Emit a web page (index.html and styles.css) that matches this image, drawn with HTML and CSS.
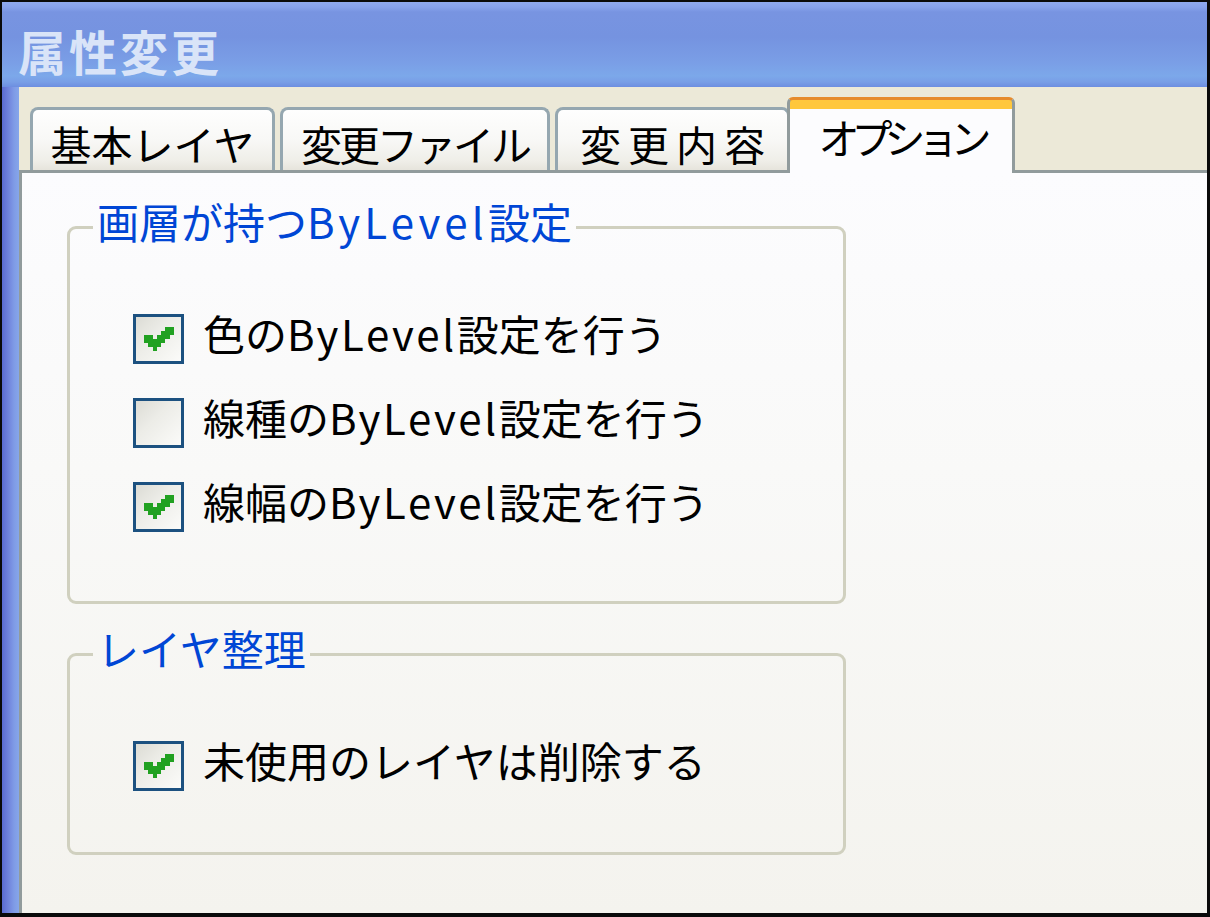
FILE: index.html
```html
<!DOCTYPE html>
<html lang="ja">
<head>
<meta charset="utf-8">
<title>属性変更</title>
<link rel="stylesheet" href="styles.css">
</head>
<body>
<div class="window">
  <div class="titlebar"><span class="title">属性変更</span></div>
  <div class="main">
    <div class="side-frame"></div>
    <div class="client">
      <div class="tabs">
        <div class="tab tab-1">基本レイヤ</div>
        <div class="tab tab-2">変更ファイル</div>
        <div class="tab tab-3">変更内容</div>
        <div class="tab tab-active">オプション</div>
      </div>
      <div class="pane">
        <fieldset class="group group-bylevel">
          <legend class="group-label">画層が持つ<span class="lat">ByLevel</span>設定</legend>
          <div class="rows rows-bylevel">
            <div class="check">
              <span class="box"><svg class="mark" viewBox="0 0 7 6" preserveAspectRatio="none" shape-rendering="crispEdges"><path d="M5 0h2v1h-2zM4 1h3v1h-3zM0 2h2v1h-2zM3 2h3v1h-3zM0 3h5v1h-5zM1 4h3v1h-3zM2 5h1v1h-1z"/></svg></span>
              <span class="check-label">色の<span class="lat">ByLevel</span>設定を行う</span>
            </div>
            <div class="check">
              <span class="box"></span>
              <span class="check-label">線種の<span class="lat">ByLevel</span>設定を行う</span>
            </div>
            <div class="check">
              <span class="box"><svg class="mark" viewBox="0 0 7 6" preserveAspectRatio="none" shape-rendering="crispEdges"><path d="M5 0h2v1h-2zM4 1h3v1h-3zM0 2h2v1h-2zM3 2h3v1h-3zM0 3h5v1h-5zM1 4h3v1h-3zM2 5h1v1h-1z"/></svg></span>
              <span class="check-label">線幅の<span class="lat">ByLevel</span>設定を行う</span>
            </div>
          </div>
        </fieldset>
        <fieldset class="group group-layer">
          <legend class="group-label">レイヤ整理</legend>
          <div class="rows rows-layer">
            <div class="check">
              <span class="box"><svg class="mark" viewBox="0 0 7 6" preserveAspectRatio="none" shape-rendering="crispEdges"><path d="M5 0h2v1h-2zM4 1h3v1h-3zM0 2h2v1h-2zM3 2h3v1h-3zM0 3h5v1h-5zM1 4h3v1h-3zM2 5h1v1h-1z"/></svg></span>
              <span class="check-label">未使用のレイヤは削除する</span>
            </div>
          </div>
        </fieldset>
      </div>
    </div>
  </div>
</div>
</body>
</html>
```

FILE: styles.css
```css
html, body {
  margin: 0;
  padding: 0;
  background: #000;
}

.window {
  box-sizing: border-box;
  width: 1210px;
  height: 917px;
  border-style: solid;
  border-color: #0a0a0a;
  border-width: 2px 3px 4px 2px;
  display: flex;
  flex-direction: column;
  font-family: "Noto Sans CJK JP", "Noto Sans", sans-serif;
  color: #000;
  overflow: hidden;
}

.titlebar {
  flex: none;
  height: 85px;
  box-sizing: border-box;
  padding: 10px 0 0 16px;
  display: flex;
  align-items: center;
  background: linear-gradient(to bottom,
    #8fa9ee 0px, #87a2ec 5px, #7894e1 10px, #7593e0 35px,
    #7a9ee6 60px, #7ca8ea 74px, #789ee6 80px, #6d8ee0 85px);
}

.title {
  color: #d9e4f8;
  font-size: 48px;
  font-weight: bold;
  line-height: 1;
  letter-spacing: 3px;
}

.main {
  flex: 1;
  display: flex;
  min-height: 0;
}

.side-frame {
  flex: none;
  width: 17px;
  background: linear-gradient(to right, #5a6bd2 0px, #6f82dc 6px, #7f9be6 12px, #86a6ea 17px);
}

.client {
  flex: 1;
  display: flex;
  flex-direction: column;
  background: #ece9d8;
  min-width: 0;
}

.tabs {
  flex: none;
  height: 83px;
  box-sizing: border-box;
  display: flex;
  align-items: flex-end;
  padding-left: 11px;
  gap: 5px;
}

.tab {
  box-sizing: border-box;
  height: 63px;
  padding-top: 6px;
  border: 3px solid #95a7b0;
  border-bottom: none;
  border-radius: 8px 8px 0 0;
  background: linear-gradient(to bottom, #fefefe 0%, #f8f8f6 50%, #efeee8 85%, #e6e4dc 100%);
  display: flex;
  align-items: center;
  justify-content: center;
  font-size: 41px;
  line-height: 1;
  white-space: nowrap;
}

.tab-1 { width: 245px; }
.tab-2 { width: 270px; letter-spacing: -3px; }
.tab-3 { width: 235px; letter-spacing: 7px; padding-left: 7px; }

.tab-active {
  width: 228px;
  height: 76px;
  padding-top: 0;
  margin-left: -8px;
  margin-bottom: -3px;
  position: relative;
  z-index: 1;
  letter-spacing: -8px;
  padding-right: 0;
  border-top: 3px solid #e68b2c;
  border-left-color: #919b9c;
  border-right-color: #919b9c;
  border-radius: 6px 6px 0 0;
  background: linear-gradient(to bottom, #ffc73c 0px, #ffc73c 9px, #fcfcfe 9px, #fcfcfe 100%);
}

.pane {
  flex: 1;
  border-top: 3px solid #919b9c;
  border-left: 3px solid #919b9c;
  background: linear-gradient(to bottom, #fcfcfe 0%, #f9f9f8 40%, #f4f3ee 100%);
  padding: 25px 0 0 45px;
}

.group {
  margin: 0;
  padding: 0;
  width: 779px;
  box-sizing: border-box;
  border: 3px solid #d0d0bf;
  border-radius: 9px;
  min-inline-size: 0;
}

.group-layer {
  margin-top: 21px;
}

.group-label {
  margin-left: 23px;
  padding: 0 4px 13px;
  font-size: 42px;
  line-height: 46px;
  color: #0046d5;
  white-space: nowrap;
}

.rows {
  display: flex;
  flex-direction: column;
  gap: 34px;
  padding-left: 63px;
  padding-top: 57px;
}

.rows-bylevel { padding-bottom: 69px; }
.rows-layer { padding-bottom: 61px; }

.check {
  display: flex;
  align-items: center;
  gap: 19px;
  height: 50px;
  font-size: 42px;
  line-height: 1;
  white-space: nowrap;
}

.check-label {
  margin-bottom: 12px;
}

.box {
  flex: none;
  box-sizing: border-box;
  width: 51px;
  height: 50px;
  border: 3px solid #1c5180;
  background: linear-gradient(135deg, #dcdcd5 0%, #ecece7 40%, #fbfbf9 100%);
  display: flex;
  align-items: center;
  justify-content: center;
}

.mark {
  width: 30px;
  height: 24px;
  fill: #21a121;
  margin-top: -1px;
}

.lat {
  letter-spacing: 0.1em;
}

.check-label .lat {
  letter-spacing: 2.6px;
}
```
